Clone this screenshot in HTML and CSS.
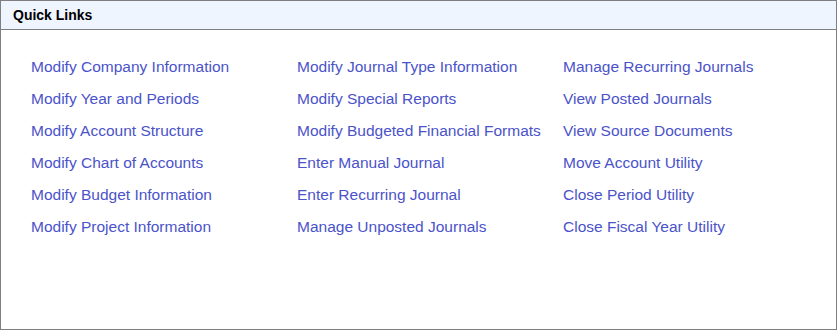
FILE: index.html
```html
<!DOCTYPE html>
<html lang="en">
<head>
<meta charset="UTF-8">
<title>Quick Links</title>
<link rel="stylesheet" href="styles.css">
</head>
<body>
<div class="panel">
  <div class="panel-head">Quick Links</div>
  <div class="links">
    <a href="#">Modify Company Information</a>
    <a href="#">Modify Journal Type Information</a>
    <a href="#">Manage Recurring Journals</a>
    <a href="#">Modify Year and Periods</a>
    <a href="#">Modify Special Reports</a>
    <a href="#">View Posted Journals</a>
    <a href="#">Modify Account Structure</a>
    <a href="#">Modify Budgeted Financial Formats</a>
    <a href="#">View Source Documents</a>
    <a href="#">Modify Chart of Accounts</a>
    <a href="#">Enter Manual Journal</a>
    <a href="#">Move Account Utility</a>
    <a href="#">Modify Budget Information</a>
    <a href="#">Enter Recurring Journal</a>
    <a href="#">Close Period Utility</a>
    <a href="#">Modify Project Information</a>
    <a href="#">Manage Unposted Journals</a>
    <a href="#">Close Fiscal Year Utility</a>
  </div>
</div>
</body>
</html>
```
FILE: styles.css
```css
body {
  margin: 0;
  background: #fff;
  font-family: "Liberation Sans", Arial, sans-serif;
}

.panel {
  width: 837px;
  height: 330px;
  box-sizing: border-box;
  border: 1px solid #7f7f7f;
}

.panel-head {
  height: 28px;
  line-height: 28px;
  padding-left: 12px;
  background: #eef5ff;
  border-bottom: 1px solid #7f7f7f;
  font-size: 14px;
  font-weight: bold;
  color: #000;
}

.links {
  display: grid;
  grid-template-columns: 266px 266px 266px;
  padding: 21px 0 0 30px;
}

.links a {
  line-height: 32px;
  font-size: 15.5px;
  color: #4b53c9;
  text-decoration: none;
}
```
